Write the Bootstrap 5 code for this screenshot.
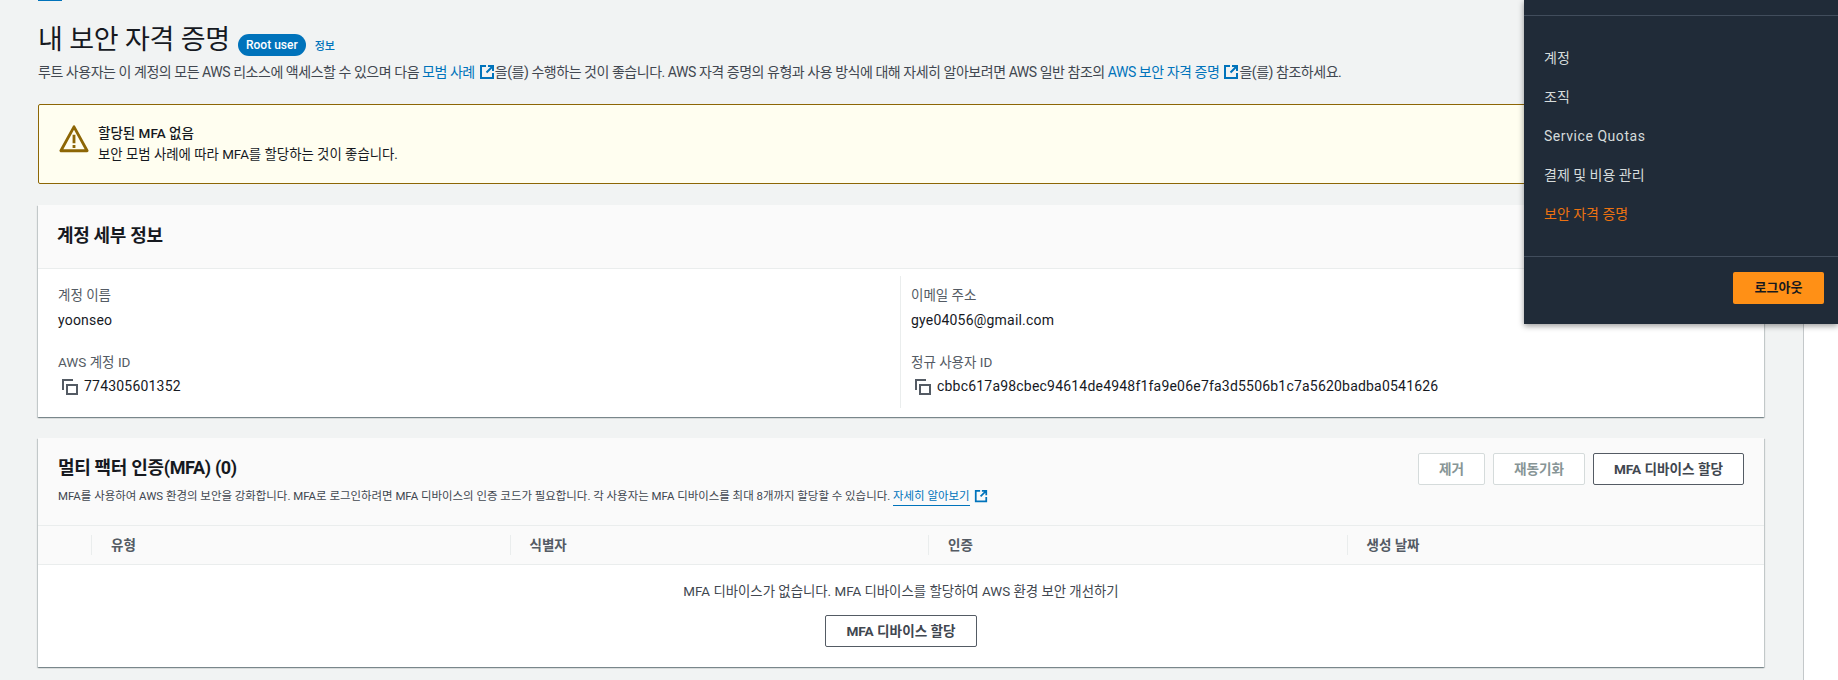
<!DOCTYPE html>
<html lang="ko">
<head>
<meta charset="utf-8">
<title>내 보안 자격 증명</title>
<link href="https://cdn.jsdelivr.net/npm/bootstrap@5.3.0/dist/css/bootstrap.min.css" rel="stylesheet">
<style>
html,body{height:680px;overflow:hidden;background:#fff}
body{font-family:Roboto,"Noto Sans CJK KR",sans-serif;font-size:14px;line-height:20px;color:#16191f;position:relative}
a{color:#0073bb;text-decoration:none}
.pagearea{width:1804px;height:680px;background:#f1f3f3;border-right:1px solid #c4c8ca;padding:0 39px 0 38px;overflow:hidden}
.topfrag{width:24px;height:1px;background:#0073bb}
.titlerow{margin-top:24px;height:30px}
.titletext{font-size:27px;line-height:30px;font-weight:400;margin:0;letter-spacing:-.2px}
.rootpill{background:#0073bb;color:#fff;font-size:12px;font-weight:500;line-height:22px;height:22px;border-radius:11px;padding:0 8px;margin-left:8px;margin-top:9px}
.infolink{font-size:11px;font-weight:500;margin-left:9px;margin-top:13px}
.subline{margin:7px 0 0;color:#414750;height:20px;white-space:nowrap;letter-spacing:-.46px}
.ext{display:inline-block;width:16px;height:16px;vertical-align:-3px;margin-left:4px}
.warnbox{margin-top:22px;height:80px;background:#fffef0;border:1px solid #8d6605;border-radius:2px;padding:18px 20px 0 20px;gap:9px}
.warnbox svg{margin-top:1px;flex:none}
.warnhead{font-weight:500;font-size:13.5px;line-height:20px}
.warntext{line-height:20px;margin-top:2px;font-size:13.4px}
.panel{background:#fff;border:0;border-radius:0;box-shadow:0 1px 1px 0 rgba(0,28,36,.3),1px 1px 1px 0 rgba(0,28,36,.15),-1px 1px 1px 0 rgba(0,28,36,.15)}
.panelone{margin-top:21px;height:212px}
.paneltwo{margin-top:21px;height:229px}
.panelhead{background:#fafafa;border-bottom:1px solid #eaeded}
.panelone .panelhead{height:64px;padding:17px 19px}
.paneltwo .panelhead{height:88px;padding:16px 20px 0}
.headtext{font-size:18px;line-height:28px;font-weight:700;margin:0;letter-spacing:-.33px}
.detailgrid{padding:7px 0 0 20px}
.detailcol{width:842px;flex:none}
.detailcol+.detailcol{border-left:1px solid #eaeded;padding-left:10px;width:auto;flex:1;height:132px}
.dlabel{color:#545b64;line-height:20px;font-size:13.5px}
.dvalue{line-height:20px;margin-top:5px;height:20px;letter-spacing:.2px}
.dblock+.dblock{margin-top:22px}
.dblock+.dblock .dvalue{margin-top:4px}
.detailcol .dblock:first-child{margin-top:9px}
.copyicon{margin:0 6px 0 4px;vertical-align:-4px}
.desc{font-size:11.45px;line-height:16px;color:#414750;margin-top:6px;white-space:nowrap}
.desc .ext{width:14px;height:14px}
.learn{border-bottom:1px solid #0073bb;padding-bottom:2px}
.awsbtn{font-size:13.6px;font-weight:700;line-height:20px;height:32px;border-radius:2px;padding:4px 20px;border:1px solid #545b64;color:#414750;background:#fff;white-space:nowrap}
.awsbtn:hover{border-color:#545b64;color:#414750;background:#fff}
.awsbtn.off,.awsbtn.off:disabled{border-color:#d5dbdb;color:#879596;background:#fff;opacity:1}
.btnrow{gap:8px;margin-top:-1px}
.heading-tbl{height:39px;background:#fafafa;border-bottom:1px solid #eaeded;padding:9px 0 0 0;font-weight:700;font-size:13.5px;color:#545b64}
.thcell{border-left:1px solid #eaeded;padding-left:19px;height:20px;line-height:20px;width:418.5px;flex:none}
.thfirst{margin-left:53px}
.emptybody{text-align:center;padding-top:17px}
.emptytext{color:#414750;font-size:13.4px;line-height:20px}
.emptybody .awsbtn{margin-top:13px;width:152px;padding:4px 0}
.usermenu{position:absolute;left:1524px;top:0;width:314px;height:324px;background:#202b38;box-shadow:0 2px 6px rgba(0,0,0,.4);color:#d5dbdb}
.menurule{height:1px;background:#414d5c}
.menurule.rtop{margin-top:15px}
.menulist{margin-top:23px;height:217px}
.menulist li{height:39px;line-height:39px;padding-left:20px;font-size:14px;font-weight:400;list-style:none}
.menulist li.now{color:#ec7211}
.menulist li.latin{letter-spacing:.55px}
.logoutbtn{background:#ff9016;border:0;border-radius:2px;color:#16191f;font-weight:700;font-size:13px;width:91px;height:32px;line-height:32px;padding:0;margin:15px 14px 0 0}
</style>
</head>
<body>
<main class="pagearea">
  <div class="topfrag"></div>
  <div class="titlerow d-flex align-items-center">
    <h1 class="titletext">내 보안 자격 증명</h1>
    <span class="rootpill">Root user</span>
    <a class="infolink" href="#">정보</a>
  </div>
  <p class="subline">루트 사용자는 이 계정의 모든 AWS 리소스에 액세스할 수 있으며 다음 <a href="#">모범 사례<svg class="ext" viewBox="0 0 16 16" fill="none" stroke="#0073bb" stroke-width="2"><path d="M7 2H2v12h12V9"/><path d="M9 2h5v5M14 2L7.5 8.5"/></svg></a>을(를) 수행하는 것이 좋습니다. AWS 자격 증명의 유형과 사용 방식에 대해 자세히 알아보려면 AWS 일반 참조의 <a href="#">AWS 보안 자격 증명<svg class="ext" viewBox="0 0 16 16" fill="none" stroke="#0073bb" stroke-width="2"><path d="M7 2H2v12h12V9"/><path d="M9 2h5v5M14 2L7.5 8.5"/></svg></a>을(를) 참조하세요.</p>

  <div class="warnbox d-flex" role="alert">
    <svg width="30" height="30" viewBox="0 0 32 32" fill="none" stroke="#8d6605" stroke-width="3" stroke-linejoin="round"><path d="M16 3L2 28.5h28z"/><path d="M16 11.5v9M16 22.5v3"/></svg>
    <div>
      <div class="warnhead">할당된 MFA 없음</div>
      <div class="warntext">보안 모범 사례에 따라 MFA를 할당하는 것이 좋습니다.</div>
    </div>
  </div>

  <section class="card panel panelone">
    <div class="panelhead"><h2 class="headtext">계정 세부 정보</h2></div>
    <div class="d-flex detailgrid">
      <div class="detailcol">
        <div class="dblock"><div class="dlabel">계정 이름</div><div class="dvalue">yoonseo</div></div>
        <div class="dblock"><div class="dlabel">AWS 계정 ID</div><div class="dvalue"><svg class="copyicon" width="16" height="16" viewBox="0 0 16 16" fill="none" stroke="#545b64" stroke-width="2"><path d="M5 6h10v9H5z"/><path d="M1 11V1h10" /></svg>774305601352</div></div>
      </div>
      <div class="detailcol">
        <div class="dblock"><div class="dlabel">이메일 주소</div><div class="dvalue">gye04056@gmail.com</div></div>
        <div class="dblock"><div class="dlabel">정규 사용자 ID</div><div class="dvalue"><svg class="copyicon" width="16" height="16" viewBox="0 0 16 16" fill="none" stroke="#545b64" stroke-width="2"><path d="M5 6h10v9H5z"/><path d="M1 11V1h10" /></svg>cbbc617a98cbec94614de4948f1fa9e06e7fa3d5506b1c7a5620badba0541626</div></div>
      </div>
    </div>
  </section>

  <section class="card panel paneltwo">
    <div class="panelhead d-flex justify-content-between">
      <div>
        <h2 class="headtext">멀티 팩터 인증(MFA) (0)</h2>
        <div class="desc">MFA를 사용하여 AWS 환경의 보안을 강화합니다. MFA로 로그인하려면 MFA 디바이스의 인증 코드가 필요합니다. 각 사용자는 MFA 디바이스를 최대 8개까지 할당할 수 있습니다. <a class="learn" href="#">자세히 알아보기</a><svg class="ext" viewBox="0 0 16 16" fill="none" stroke="#0073bb" stroke-width="2"><path d="M7 2H2v12h12V9"/><path d="M9 2h5v5M14 2L7.5 8.5"/></svg></div>
      </div>
      <div class="d-flex btnrow align-items-start">
        <button class="btn awsbtn off" disabled>제거</button>
        <button class="btn awsbtn off" disabled>재동기화</button>
        <button class="btn awsbtn">MFA 디바이스 할당</button>
      </div>
    </div>
    <div class="heading-tbl d-flex">
      <div class="thcell thfirst">유형</div>
      <div class="thcell">식별자</div>
      <div class="thcell">인증</div>
      <div class="thcell">생성 날짜</div>
    </div>
    <div class="emptybody">
      <div class="emptytext">MFA 디바이스가 없습니다. MFA 디바이스를 할당하여 AWS 환경 보안 개선하기</div>
      <button class="btn awsbtn">MFA 디바이스 할당</button>
    </div>
  </section>
</main>

<aside class="usermenu d-flex flex-column">
  <div class="menurule rtop"></div>
  <ul class="menulist p-0 mb-0">
    <li>계정</li>
    <li>조직</li>
    <li class="latin">Service Quotas</li>
    <li>결제 및 비용 관리</li>
    <li class="now">보안 자격 증명</li>
  </ul>
  <div class="menurule"></div>
  <div class="d-flex justify-content-end"><button class="btn logoutbtn">로그아웃</button></div>
</aside>
<script src="https://cdn.jsdelivr.net/npm/bootstrap@5.3.0/dist/js/bootstrap.bundle.min.js"></script>
</body>
</html>
